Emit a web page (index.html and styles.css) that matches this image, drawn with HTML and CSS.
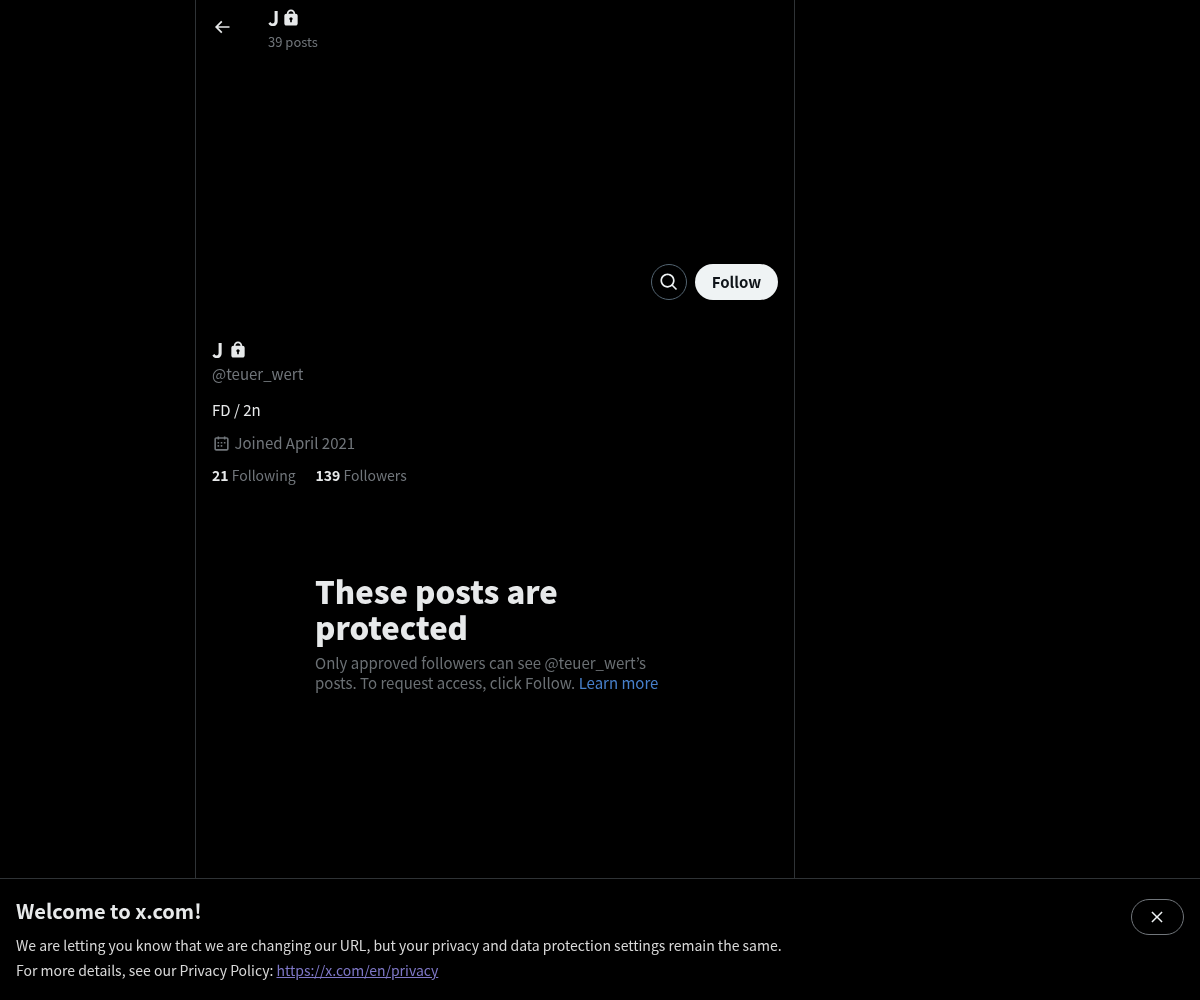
FILE: index.html
```html
<!DOCTYPE html>
<html lang="en">
<head>
    <meta charset="UTF-8">
    <meta name="viewport" content="width=device-width, initial-scale=1.0">
    <title>J (@teuer_wert) / X</title>
    <link rel="stylesheet" href="styles.css">
</head>
<body>

<div class="page">
    <!-- Profile column -->
    <main class="column">
        <div class="top-bar">
            <div class="back-cell">
                <svg class="back-icon" viewBox="0 0 24 24"><path d="M7.414 13l5.043 5.04-1.414 1.42L3.586 12l7.457-7.46 1.414 1.42L7.414 11H21v2H7.414z"/></svg>
            </div>
            <div class="top-text">
                <div class="top-name">J
                    <svg class="lock lock-top" viewBox="0 0 24 24"><path d="M17.5 7H17v-.25c0-2.76-2.24-5-5-5s-5 2.24-5 5V7h-.5C5.12 7 4 8.12 4 9.5v9C4 19.88 5.12 21 6.5 21h11c1.39 0 2.5-1.12 2.5-2.5v-9C20 8.12 18.89 7 17.5 7zM13 14.73V17h-2v-2.27c-.59-.34-1-.99-1-1.73 0-1.1.9-2 2-2 1.11 0 2 .9 2 2 0 .74-.4 1.39-1 1.73zM15 7H9v-.25c0-1.66 1.35-3 3-3 1.66 0 3 1.34 3 3V7z"/></svg>
                </div>
                <div class="top-count">39 posts</div>
            </div>
        </div>

        <div class="actions">
            <button class="search-btn">
                <svg class="search-icon" viewBox="0 0 24 24"><path d="M10.25 3.75c-3.59 0-6.5 2.91-6.5 6.5s2.91 6.5 6.5 6.5c1.795 0 3.419-.726 4.596-1.904 1.178-1.177 1.904-2.801 1.904-4.596 0-3.59-2.91-6.5-6.5-6.5zm-8.5 6.5c0-4.694 3.806-8.5 8.5-8.5s8.5 3.806 8.5 8.5c0 1.986-.682 3.815-1.824 5.262l4.781 4.781-1.414 1.414-4.781-4.781c-1.447 1.142-3.276 1.824-5.262 1.824-4.694 0-8.5-3.806-8.5-8.5z"/></svg>
            </button>
            <button class="follow-btn">Follow</button>
        </div>

        <div class="profile">
            <div class="name">J
                <svg class="lock lock-name" viewBox="0 0 24 24"><path d="M17.5 7H17v-.25c0-2.76-2.24-5-5-5s-5 2.24-5 5V7h-.5C5.12 7 4 8.12 4 9.5v9C4 19.88 5.12 21 6.5 21h11c1.39 0 2.5-1.12 2.5-2.5v-9C20 8.12 18.89 7 17.5 7zM13 14.73V17h-2v-2.27c-.59-.34-1-.99-1-1.73 0-1.1.9-2 2-2 1.11 0 2 .9 2 2 0 .74-.4 1.39-1 1.73zM15 7H9v-.25c0-1.66 1.35-3 3-3 1.66 0 3 1.34 3 3V7z"/></svg>
            </div>
            <div class="handle">@teuer_wert</div>
            <div class="bio">FD / 2n</div>
            <div class="joined">
                <svg class="cal-icon" viewBox="0 0 24 24"><path d="M7 4V3h2v1h6V3h2v1h1.5C19.89 4 21 5.12 21 6.5v12c0 1.38-1.11 2.5-2.5 2.5h-13C4.12 21 3 19.88 3 18.5v-12C3 5.12 4.12 4 5.5 4H7zm0 2H5.5c-.27 0-.5.22-.5.5v12c0 .28.23.5.5.5h13c.28 0 .5-.22.5-.5v-12c0-.28-.22-.5-.5-.5H17v1h-2V6H9v1H7V6zm0 6h2v-2H7v2zm0 4h2v-2H7v2zm4-4h2v-2h-2v2zm0 4h2v-2h-2v2zm4-4h2v-2h-2v2z"/></svg>
                <span>Joined April 2021</span>
            </div>
            <div class="stats">
                <span class="stat"><b>21</b> Following</span>
                <span class="stat"><b>139</b> Followers</span>
            </div>
        </div>

        <div class="protected">
            <h1 class="protected-title">These posts are protected</h1>
            <p class="protected-text">Only approved followers can see @teuer_wert’s posts. To request access, click Follow. <a class="learn" href="#">Learn more</a></p>
        </div>
    </main>

    <!-- Welcome banner -->
    <section class="banner">
        <div class="banner-text">
            <h2 class="banner-title">Welcome to x.com!</h2>
            <p class="banner-line">We are letting you know that we are changing our URL, but your privacy and data protection settings remain the same.</p>
            <p class="banner-line">For more details, see our Privacy Policy: <a class="privacy" href="#">https://x.com/en/privacy</a></p>
        </div>
        <button class="close-btn">
            <svg class="close-icon" viewBox="0 0 24 24"><path d="M10.59 12L4.54 5.96l1.42-1.42L12 10.59l6.04-6.05 1.42 1.42L13.41 12l6.05 6.04-1.42 1.42L12 13.41l-6.04 6.05-1.42-1.42L10.59 12z"/></svg>
        </button>
    </section>
</div>

</body>
</html>
```

FILE: styles.css
```css
body, html {
    height: 100%;
    margin: 0;
    font-family: "Noto Sans CJK JP", "Noto Sans", sans-serif;
    color: #e7e9ea;
    background-color: #000;
    overflow: hidden;
}

.page {
    display: flex;
    flex-direction: column;
    height: 1000px;
    will-change: transform; /* text comes out with grey antialiasing like the original */
}

svg {
    display: block;
    fill: currentColor;
}

button {
    font-family: inherit;
    background: none;
    padding: 0;
    cursor: pointer;
}

/* Profile column */
.column {
    flex: 1;
    box-sizing: border-box;
    width: 600px;
    margin-left: 195px;
    border-left: 1px solid #2f3336;
    border-right: 1px solid #2f3336;
}

/* Top bar */
.top-bar {
    display: flex;
    height: 53px;
}

.back-cell {
    width: 72px;
    padding: 17px 0 0 16px;
    box-sizing: border-box;
}

.back-icon {
    width: 20px;
    height: 20px;
}

.top-text {
    padding-top: 6px;
}

.top-name {
    display: flex;
    align-items: center;
    gap: 2px;
    font-size: 20px;
    font-weight: 700;
    line-height: 24px;
}

.lock-top {
    width: 20px;
    height: 20px;
}

.top-count {
    font-size: 13px;
    line-height: 16px;
    margin-top: 4px;
    color: #71767b;
}

/* Search and follow */
.actions {
    display: flex;
    justify-content: flex-end;
    gap: 8px;
    padding: 211px 16px 0 0;
}

.search-btn {
    display: flex;
    align-items: center;
    justify-content: center;
    width: 36px;
    height: 36px;
    border: 1px solid #536471;
    border-radius: 50%;
    color: #eff3f4;
}

.search-icon {
    width: 20px;
    height: 20px;
}

.follow-btn {
    width: 83px;
    height: 36px;
    border: 0;
    border-radius: 18px;
    padding-bottom: 1px;
    background: #eff3f4;
    color: #0f1419;
    font-size: 15px;
    font-weight: 700;
}

/* Profile info */
.profile {
    padding: 37px 16px 0;
}

.name {
    display: flex;
    align-items: center;
    gap: 5px;
    font-size: 20px;
    font-weight: 700;
    line-height: 26px;
}

.lock-name {
    width: 20px;
    height: 20px;
}

.handle {
    font-size: 15px;
    line-height: 20px;
    margin-top: 1px;
    color: #71767b;
}

.bio {
    font-size: 15px;
    line-height: 20px;
    margin-top: 16px;
}

.joined {
    display: flex;
    align-items: center;
    gap: 3.5px;
    font-size: 15px;
    line-height: 20px;
    margin-top: 13px;
    color: #71767b;
}

.cal-icon {
    width: 19px;
    height: 19px;
}

.stats {
    display: flex;
    gap: 20px;
    font-size: 14px;
    line-height: 20px;
    margin-top: 12px;
    color: #71767b;
}

.stat b {
    color: #e7e9ea;
}

/* Protected notice */
.protected {
    width: 352px;
    margin: 88px 0 0 119px;
}

.protected-title {
    margin: 0;
    font-size: 31px;
    line-height: 36px;
    font-weight: 800;
}

.protected-text {
    margin: 8px 0 0;
    font-size: 15px;
    line-height: 20px;
    color: #6b7074;
}

.learn {
    display: inline-block;
    color: #4780cc;
    text-decoration: none;
}

/* Welcome banner */
.banner {
    display: flex;
    justify-content: space-between;
    height: 122px;
    box-sizing: border-box;
    padding: 20px 16px 0;
    border-top: 1px solid #2f3336;
}

.banner-title {
    margin: 0 0 10px;
    font-size: 20px;
    line-height: 24px;
    font-weight: 700;
}

.banner-line {
    margin: 0;
    font-size: 14px;
    line-height: 25px;
    color: #d9d9d9;
}

.privacy {
    color: #7f78c8;
    text-decoration: underline;
}

.close-btn {
    display: flex;
    align-items: center;
    justify-content: center;
    width: 53px;
    height: 36px;
    padding-right: 1px;
    border: 1px solid #71767b;
    border-radius: 18px;
    color: #eff3f4;
}

.close-icon {
    width: 18px;
    height: 18px;
}
```
